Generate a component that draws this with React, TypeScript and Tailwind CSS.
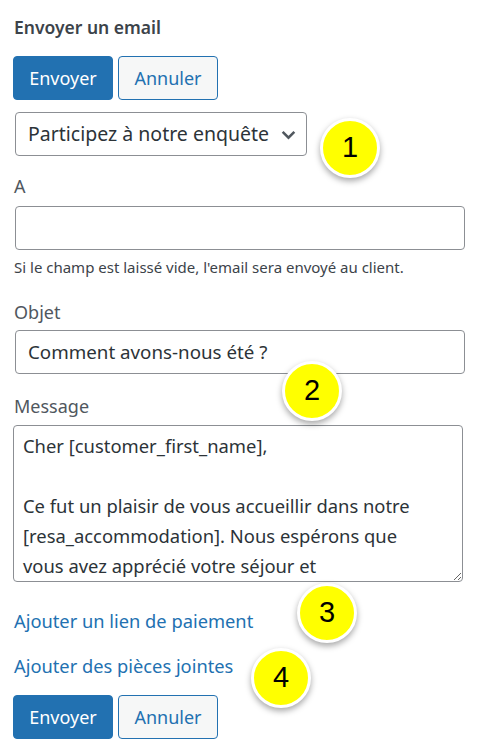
import React from "react";

function Badge({ n, className }: { n: string; className: string }) {
  return (
    <div
      className={`absolute w-[60px] h-[60px] rounded-full bg-[#ffff00] border-[3px] border-white flex items-center justify-center text-black text-[29px] shadow-[0_3px_6px_rgba(0,0,0,0.35)] ${className}`}
      style={{ fontFamily: "'Liberation Sans', Arial, sans-serif" }}
    >
      {n}
    </div>
  );
}

function Buttons() {
  return (
    <div className="flex gap-[5px]">
      <button className="w-[100px] h-[44px] rounded-[4px] bg-[#2271b1] text-white text-[18px] border border-[#2271b1]">
        Envoyer
      </button>
      <button className="w-[100px] h-[44px] rounded-[4px] bg-[#f6f7f7] text-[#2271b1] text-[18px] border border-[#2271b1]">
        Annuler
      </button>
    </div>
  );
}

export default function App() {
  const msg =
    "Cher [customer_first_name],\n\nCe fut un plaisir de vous accueillir dans notre [resa_accommodation]. Nous espérons que vous avez apprécié votre séjour et\nque vous reviendrez bientôt.";
  return (
    <div
      className="relative w-[477px] h-[754px] bg-white text-[#3c434a] pl-[13px] pr-[12px] pt-[14px]"
      style={{ fontFamily: "'Noto Sans', 'Open Sans', sans-serif" }}
    >
      <h2 className="text-[17.5px] font-semibold leading-[26px] pl-[1px] text-[#3c434a]">Envoyer un email</h2>
      <div className="mt-[16px]">
        <Buttons />
      </div>
      <div className="mt-[12px] ml-[2px] w-[292px] h-[44px] border border-[#8c8f94] rounded-[4px] flex items-center justify-between pl-[12px] pr-[9px]">
        <span className="text-[19.5px] text-[#2c3338] whitespace-nowrap">Participez à notre enquête</span>
        <svg width="17" height="17" viewBox="0 0 16 16" fill="none" className="shrink-0">
          <path d="M2.5 5.5 L8 11 L13.5 5.5" stroke="#50575e" strokeWidth="2.4" />
        </svg>
      </div>
      <div className="mt-[18px] ml-[1px] text-[18px] leading-[24px] text-[#50575e]">A</div>
      <div className="mt-[8px] ml-[2px] w-[450px] h-[44px] border border-[#8c8f94] rounded-[4px]" />
      <div className="mt-[7px] ml-[1px] text-[15px] leading-[20px] text-[#3c434a] whitespace-nowrap">
        Si le champ est laissé vide, l'email sera envoyé au client.
      </div>
      <div className="mt-[23px] ml-[1px] text-[18px] leading-[24px] text-[#50575e]">Objet</div>
      <div className="mt-[6px] ml-[2px] w-[450px] h-[44px] border border-[#8c8f94] rounded-[4px] flex items-center pl-[12px]">
        <span className="text-[18.75px] text-[#2c3338]">Comment avons-nous été ?</span>
      </div>
      <div className="mt-[20px] ml-[1px] text-[18px] leading-[24px] text-[#50575e]">Message</div>
      <textarea
        readOnly
        value={msg}
        className="mt-[7px] block w-[450px] h-[157px] border border-[#8c8f94] rounded-[4px] pl-[9px] pr-[22px] pt-[5px] text-[18.4px] leading-[30px] text-[#2c3338] overflow-hidden resize-y outline-none"
        style={{ fontFamily: "'Noto Sans', 'Open Sans', sans-serif" }}
      />
      <div className="mt-[27px] ml-[1px] text-[18.3px] leading-[24px] text-[#2271b1]">Ajouter un lien de paiement</div>
      <div className="mt-[21px] ml-[1px] text-[18.3px] leading-[24px] text-[#2271b1]">Ajouter des pièces jointes</div>
      <div className="mt-[17px]">
        <Buttons />
      </div>

      <Badge n="1" className="left-[320px] top-[118px]" />
      <Badge n="2" className="left-[282px] top-[361px]" />
      <Badge n="3" className="left-[297px] top-[583px]" />
      <Badge n="4" className="left-[251px] top-[648px]" />
    </div>
  );
}
